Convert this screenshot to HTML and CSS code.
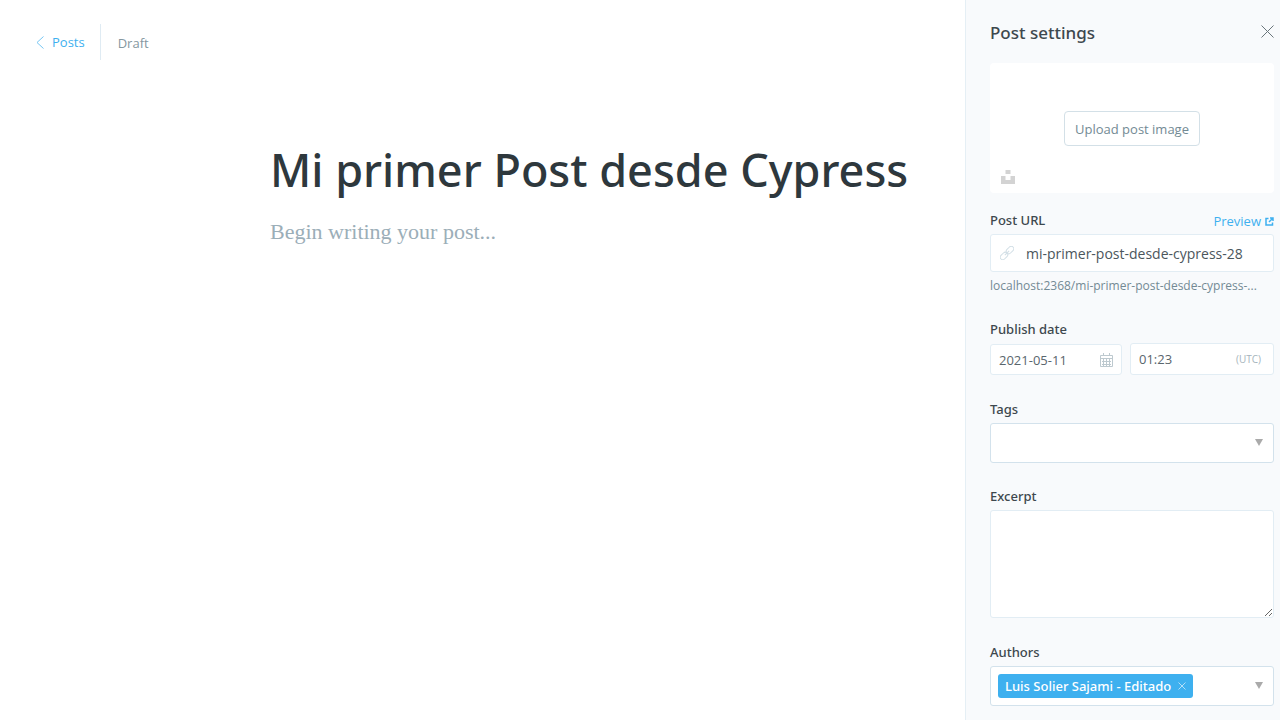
FILE: index.html
```html
<!DOCTYPE html>
<html lang="en">
<head>
<meta charset="utf-8">
<meta name="viewport" content="width=device-width, initial-scale=1">
<title>Post editor</title>
<link rel="stylesheet" href="styles.css">
</head>
<body>
<div class="app">
  <main class="editor">
    <header class="editor-header">
      <a class="back" href="#"><svg class="back-icon" viewBox="0 0 8 13" aria-hidden="true"><path d="M7.5 .5l-6.500 6 6.500 6"/></svg>Posts</a>
      <span class="status">Draft</span>
    </header>
    <div class="canvas">
      <h1 class="title">Mi primer Post desde Cypress</h1>
      <p class="placeholder">Begin writing your post...</p>
    </div>
  </main>
  <aside class="settings">
    <header class="settings-header">
      <h2 class="settings-title">Post settings</h2>
      <button class="close" type="button" aria-label="Close"><svg viewBox="0 0 13 13" aria-hidden="true"><path d="M.5 .5l12 12M12.500 .5l-12 12"/></svg></button>
    </header>
    <div class="uploader">
      <button class="upload" type="button">Upload post image</button>
      <button class="unsplash" type="button" aria-label="Unsplash"><svg viewBox="0 0 14 14" aria-hidden="true"><path d="M4.500 0h5v4h-5zM0 6h4.500v4h5V6H14v8H0z"/></svg></button>
    </div>
    <div class="field">
      <div class="label-row">
        <label class="label" for="url">Post URL</label>
        <a class="preview" href="#">Preview <svg viewBox="0 0 9 9" aria-hidden="true"><path d="M3.500 1.500H1v6.500h6.500V5.500M5 1h3v3M8 1L4 5"/></svg></a>
      </div>
      <div class="box url-box">
        <svg class="link-icon" viewBox="0 0 14 14" aria-hidden="true"><g transform="rotate(-45 7 7)"><rect x="-1.500" y="4.500" width="8.500" height="5" rx="2.500"/><rect x="7" y="4.500" width="8.500" height="5" rx="2.500"/><path d="M4 7h6"/></g></svg>
        <input id="url" class="input url-input" type="text" value="mi-primer-post-desde-cypress-28">
      </div>
      <p class="hint">localhost:2368/mi-primer-post-desde-cypress-...</p>
    </div>
    <div class="field">
      <label class="label" for="date">Publish date</label>
      <div class="date-row">
        <div class="box date-box">
          <input id="date" class="input" type="text" value="2021-05-11">
          <svg class="calendar" viewBox="0 0 13 14" aria-hidden="true"><path d="M.5 2.500h12v11H.5zM.5 5.500h12M2 8.500h9M2 11.500h9M3.500 0v3M9.500 0v3M3.500 6v7M6.500 6v7M9.500 6v7"/></svg>
        </div>
        <div class="box time-box">
          <input class="input" type="text" aria-label="Publish time" value="01:23">
          <span class="zone">(UTC)</span>
        </div>
      </div>
    </div>
    <div class="field field-tags">
      <label class="label" for="tags">Tags</label>
      <div class="box picker">
        <select id="tags" class="tags"><option></option></select>
        <svg class="arrow" viewBox="0 0 8 7" aria-hidden="true"><path d="M0 0h8L4 7z"/></svg>
      </div>
    </div>
    <div class="field">
      <label class="label" for="excerpt">Excerpt</label>
      <textarea id="excerpt" class="box excerpt"></textarea>
    </div>
    <div class="field">
      <span class="label" id="authors-label">Authors</span>
      <div class="box picker" role="group" aria-labelledby="authors-label">
        <span class="token">Luis Solier Sajami - Editado <button class="remove" type="button" aria-label="Remove author"><svg viewBox="0 0 8 8" aria-hidden="true"><path d="M.5 .5l7 7M7.500 .5l-7 7"/></svg></button></span>
        <svg class="arrow" viewBox="0 0 8 7" aria-hidden="true"><path d="M0 0h8L4 7z"/></svg>
      </div>
    </div>
  </aside>
</div>
</body>
</html>
```
FILE: styles.css
```css
* { box-sizing: border-box; }
body {
  margin: 0;
  color: #394047;
  background: #fff;
  font: 13px/18px "Segoe UI", "Open Sans", sans-serif;
}
h1, h2, p { margin: 0; font-weight: 400; }
button, input, select, textarea { font: inherit; color: inherit; }
button { padding: 0; border: 0; background: none; cursor: pointer; }
a { color: #3eb0ef; text-decoration: none; }
svg { display: block; fill: none; stroke: currentColor; }

.app {
  display: grid;
  grid-template-columns: minmax(0, 1fr) 315px;
  height: 100vh;
  overflow: hidden;
}
.editor-header { display: flex; align-items: center; padding: 24px 36px; }
.back {
  display: flex;
  align-items: center;
  gap: 8px;
  height: 36px;
  padding-right: 15px;
  border-right: 1px solid #dfebf3;
}
.back-icon { width: 8px; height: 13px; opacity: .7; }
.status { padding: 2px 0 0 17px; color: #86979f; }
.canvas { padding: 50px 48px 0 270px; }
.title, .settings-title, .label, .token {
  font-family: "Segoe UI", "Noto Sans", sans-serif;
  font-weight: 500;
}
.title {
  color: #2e383d;
  font-size: 45px;
  line-height: 72px;
  white-space: nowrap;
}
.placeholder {
  padding-top: 10px;
  color: #9baeb8;
  font: 22px/32px Georgia, "Liberation Serif", serif;
}

.settings {
  overflow: hidden;
  padding: 20px 6px 0 24px;
  border-left: 1px solid #e5eff5;
  background: #f8fafc;
}
.settings-header { display: flex; justify-content: space-between; height: 43px; }
.settings-title { font-size: 17px; line-height: 25px; color: #3d484e; }
.close { height: 22px; color: #69757b; }
.close svg { width: 13px; height: 13px; }
.uploader {
  position: relative;
  display: flex;
  align-items: center;
  justify-content: center;
  height: 130px;
  margin-bottom: 18px;
  border-radius: 4px;
  background: #fff;
}
.upload {
  height: 35px;
  padding: 1px 10px 0;
  border: 1px solid #d3e0e7;
  border-radius: 4px;
  color: #738a94;
}
.unsplash { position: absolute; left: 11px; bottom: 9px; color: #d3d3d3; }
.unsplash svg { width: 14px; height: 14px; fill: currentColor; stroke: none; }

.field { margin-bottom: 25px; }
.field-tags { margin-bottom: 24px; }
.label {
  display: block;
  padding-bottom: 5px;
  color: #3d484e;
}
.label-row { display: flex; justify-content: space-between; }
.preview { display: flex; align-items: center; gap: 4px; height: 20px; }
.preview svg { width: 9px; height: 9px; stroke-width: 1.5; }
.box {
  display: flex;
  align-items: center;
  width: 100%;
  border: 1px solid #e2edf4;
  border-radius: 3px;
  background: #fff;
}
.input {
  width: 100%;
  min-width: 0;
  padding: 0;
  border: 0;
  outline: 0;
  background: none;
  color: #5a666d;
}
.url-box { gap: 12px; height: 38px; padding: 0 9px; }
.url-input { padding-top: 1px; font-size: 14px; color: #4b565c; }
.link-icon { flex: none; width: 14px; height: 14px; color: #d2dfe6; }
.hint {
  padding-top: 5px;
  color: #738a94;
  font-size: 12px;
  white-space: nowrap;
}
.date-row { display: flex; align-items: flex-end; gap: 8px; }
.date-box { width: 132px; height: 31px; padding: 0 8px; }
.time-box { flex: 1; height: 32px; padding: 0 12px 0 8px; }
.calendar { flex: none; width: 13px; height: 14px; color: #bdc9cf; }
.zone { color: #a5b4bc; font-size: 10px; }
.picker { position: relative; height: 40px; padding: 0 7px; border-color: #d3e2ec; }
.tags {
  width: 100%;
  height: 100%;
  border: 0;
  outline: 0;
  appearance: none;
  background: none;
}
.arrow {
  position: absolute;
  right: 10px;
  top: 15px;
  width: 8px;
  height: 7px;
  fill: #aaa;
  stroke: none;
  pointer-events: none;
}
.excerpt { display: block; height: 108px; resize: vertical; outline: 0; }
.token {
  display: flex;
  align-items: center;
  gap: 7px;
  height: 24px;
  padding: 0 7px;
  border-radius: 3px;
  background: #3eb0ef;
  color: #fff;
  white-space: nowrap;
}
.remove { opacity: .6; }
.remove svg { width: 8px; height: 8px; }
```
